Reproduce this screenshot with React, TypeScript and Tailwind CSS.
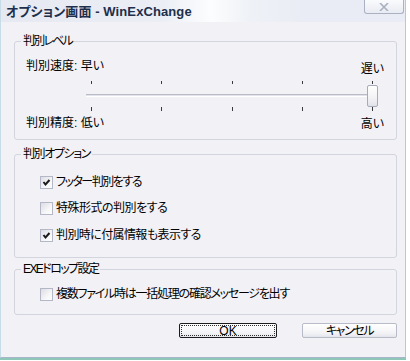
import React from "react";

const FONT = "font-['Liberation_Sans','Noto_Sans_CJK_JP',sans-serif] [font-feature-settings:'palt']";

function CheckBox({ checked, label, track }: { checked: boolean; label: string; track: string }) {
  return (
    <div className="flex items-center h-[16px] pl-[25px] gap-[3px]">
      <div className="w-[13px] h-[13px] border border-[#b4b8c6] bg-[linear-gradient(135deg,#dcdce4_0%,#f6f6f8_60%,#ffffff_100%)] flex items-center justify-center">
        {checked && (
          <svg width="11" height="11" viewBox="0 0 11 11">
            <polyline points="2.5,5 4.5,7.5 8.5,3" fill="none" stroke="#1a1a1a" strokeWidth="2" />
          </svg>
        )}
      </div>
      <span className={`text-[12px] leading-[16px] text-black whitespace-nowrap ${track}`}>{label}</span>
    </div>
  );
}

function Legend({ children, track }: { children: React.ReactNode; track: string }) {
  return (
    <legend className={`ml-[6px] px-[2px] text-[12px] leading-[14px] text-black whitespace-nowrap ${track}`}>
      {children}
    </legend>
  );
}

export default function App() {
  const ticks = [5, 75, 146, 216, 286];
  return (
    <div className={`w-[410px] h-[361px] bg-white overflow-hidden ${FONT}`}>
      <div className="w-[406px] h-[360px] flex flex-col border-b-2 border-b-[#8ec6b8]">
        <div className="flex-1 flex flex-col bg-[#f1f1f6] border-l border-l-[#c6dde8] border-r border-r-[#c0c4ce] border-b border-b-[#a9b5c9]">
          {/* title bar */}
          <div className="h-[22px] flex items-start bg-[linear-gradient(90deg,#e6e9f1_0%,#ebeef5_40%,#fcfdfe_52%,#eef1f6_62%,#e9ecf4_75%,#e9ecf4_100%)]">
            <div className="pl-[5px] pt-[4px] text-[13px] leading-[15px] font-bold text-[#1d2f4c] tracking-[0.1px] whitespace-nowrap">
              オプション画面 - WinExChange
            </div>
            <div className="ml-auto mr-[1px] w-[40px] h-[14px] border border-t-0 border-[#aab2c2] rounded-b-[3px] bg-[linear-gradient(180deg,#fafbfd_0%,#e8ebf2_100%)] flex items-center justify-center">
              <svg width="10" height="8" viewBox="0 0 10 8">
                <path d="M1 0 L9 8 M9 0 L1 8" stroke="#a9b0bf" strokeWidth="1.6" />
              </svg>
            </div>
          </div>

          {/* body */}
          <div className="flex flex-col pl-[13px]">
            <fieldset className="w-[383px] h-[106px] mt-[12px] border border-[#d3d5de] rounded-[3px] pt-[10px]">
              <Legend track="tracking-[-1.8px]">判別レベル</Legend>
              <div className="flex justify-between items-start h-[16px] pl-[11px] pr-[12px]">
                <span className="text-[12px] leading-[16px]">判別速度: 早い</span>
                <span className="text-[12px] leading-[16px] mt-[3px]">遅い</span>
              </div>
              <div className="relative ml-[71px] mt-[7px] w-[292px] h-[30px]">
                {ticks.map((x) => (
                  <div key={"t" + x} className="absolute top-0 w-px h-[3px] bg-[#3a3a3a]" style={{ left: x }} />
                ))}
                <div className="absolute left-0 right-0 top-[13px] h-[3px] border-t border-t-[#b9bcc6] bg-[#e2e3ea] border-b border-b-white" />
                <div className="absolute left-[281px] top-[4px] w-[11px] h-[22px] border border-[#a6abb9] rounded-[2px] bg-[linear-gradient(180deg,#ffffff_0%,#f2f2f5_60%,#e2e3ea_100%)]" />
                {ticks.map((x) => (
                  <div key={"b" + x} className="absolute top-[26px] w-px h-[4px] bg-[#3a3a3a]" style={{ left: x }} />
                ))}
              </div>
              <div className="flex justify-between items-start h-[16px] mt-[4px] pl-[11px] pr-[12px]">
                <span className="text-[12px] leading-[16px]">判別精度: 低い</span>
                <span className="text-[12px] leading-[16px] mt-[1px]">高い</span>
              </div>
            </fieldset>

            <fieldset className="w-[383px] h-[111px] mt-[7px] border border-[#d3d5de] rounded-[3px] pt-[13px] flex flex-col">
              <Legend track="tracking-[-1.4px]">判別オプション</Legend>
              <CheckBox checked label="フッター判別をする" track="tracking-[-1.5px]" />
              <div className="mt-[10px]">
                <CheckBox checked={false} label="特殊形式の判別をする" track="tracking-[-0.5px]" />
              </div>
              <div className="mt-[11px]">
                <CheckBox checked label="判別時に付属情報も表示する" track="tracking-[-0.6px]" />
              </div>
            </fieldset>

            <fieldset className="w-[383px] h-[53px] mt-[4px] border border-[#d3d5de] rounded-[3px] pt-[10px]">
              <Legend track="tracking-[-1.6px]">EXEドロップ設定</Legend>
              <CheckBox checked={false} label="複数ファイル時は一括処理の確認メッセージを出す" track="tracking-[-1.25px]" />
            </fieldset>

            <div className="w-[383px] flex justify-end gap-[25px] mt-[8px]">
              <div className="w-[98px] h-[15px] border border-[#1c1c1c] rounded-[2px] bg-[linear-gradient(180deg,#ffffff_0%,#f3f3f6_70%,#e4e5ec_100%)] p-[1px]">
                <div className="w-full h-full border border-dotted border-[#303030] flex items-center justify-center text-[12px] leading-[12px]">
                  OK
                </div>
              </div>
              <div className="w-[95px] h-[15px] border border-[#b8bcc8] rounded-[2px] bg-[linear-gradient(180deg,#ffffff_0%,#f3f3f6_70%,#e4e5ec_100%)] flex items-center justify-center text-[12px] leading-[12px] tracking-[-1.4px]">
                キャンセル
              </div>
            </div>
          </div>
        </div>
      </div>
    </div>
  );
}
